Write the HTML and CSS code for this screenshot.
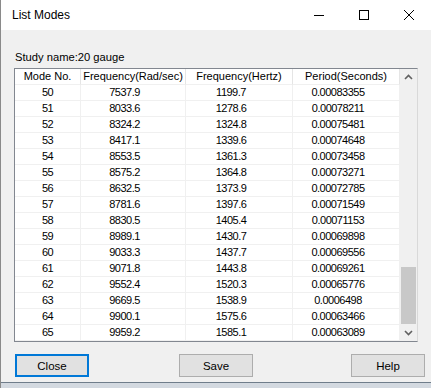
FILE: index.html
```html
<!DOCTYPE html>
<html>
<head>
<meta charset="utf-8">
<link rel="stylesheet" href="styles.css">
</head>
<body>
<div class="window">
  <div class="titlebar">
    <span class="title">List Modes</span>
    <div class="controls">
      <span class="ctl ctl-min"><svg width="12" height="12" viewBox="0 0 12 12"><path d="M1 6.5H11" stroke="#000" stroke-width="1"/></svg></span>
      <span class="ctl ctl-max"><svg width="12" height="12" viewBox="0 0 12 12"><rect x="1.5" y="1.5" width="9" height="9" fill="none" stroke="#000" stroke-width="1"/></svg></span>
      <span class="ctl ctl-close"><svg width="12" height="12" viewBox="0 0 12 12"><path d="M1 1L11 11M11 1L1 11" stroke="#000" stroke-width="1"/></svg></span>
    </div>
  </div>
  <div class="client">
    <div class="label">Study name:20 gauge</div>
    <div class="listview">
      <div class="grid">
        <div class="row head">
          <div class="c c1">Mode No.</div>
          <div class="c c2">Frequency(Rad/sec)</div>
          <div class="c c3">Frequency(Hertz)</div>
          <div class="c c4">Period(Seconds)</div>
        </div>
        <div class="row"><div class="c c1">50</div><div class="c c2">7537.9</div><div class="c c3">1199.7</div><div class="c c4">0.00083355</div></div>
        <div class="row"><div class="c c1">51</div><div class="c c2">8033.6</div><div class="c c3">1278.6</div><div class="c c4">0.00078211</div></div>
        <div class="row"><div class="c c1">52</div><div class="c c2">8324.2</div><div class="c c3">1324.8</div><div class="c c4">0.00075481</div></div>
        <div class="row"><div class="c c1">53</div><div class="c c2">8417.1</div><div class="c c3">1339.6</div><div class="c c4">0.00074648</div></div>
        <div class="row"><div class="c c1">54</div><div class="c c2">8553.5</div><div class="c c3">1361.3</div><div class="c c4">0.00073458</div></div>
        <div class="row"><div class="c c1">55</div><div class="c c2">8575.2</div><div class="c c3">1364.8</div><div class="c c4">0.00073271</div></div>
        <div class="row"><div class="c c1">56</div><div class="c c2">8632.5</div><div class="c c3">1373.9</div><div class="c c4">0.00072785</div></div>
        <div class="row"><div class="c c1">57</div><div class="c c2">8781.6</div><div class="c c3">1397.6</div><div class="c c4">0.00071549</div></div>
        <div class="row"><div class="c c1">58</div><div class="c c2">8830.5</div><div class="c c3">1405.4</div><div class="c c4">0.00071153</div></div>
        <div class="row"><div class="c c1">59</div><div class="c c2">8989.1</div><div class="c c3">1430.7</div><div class="c c4">0.00069898</div></div>
        <div class="row"><div class="c c1">60</div><div class="c c2">9033.3</div><div class="c c3">1437.7</div><div class="c c4">0.00069556</div></div>
        <div class="row"><div class="c c1">61</div><div class="c c2">9071.8</div><div class="c c3">1443.8</div><div class="c c4">0.00069261</div></div>
        <div class="row"><div class="c c1">62</div><div class="c c2">9552.4</div><div class="c c3">1520.3</div><div class="c c4">0.00065776</div></div>
        <div class="row"><div class="c c1">63</div><div class="c c2">9669.5</div><div class="c c3">1538.9</div><div class="c c4">0.0006498</div></div>
        <div class="row"><div class="c c1">64</div><div class="c c2">9900.1</div><div class="c c3">1575.6</div><div class="c c4">0.00063466</div></div>
        <div class="row"><div class="c c1">65</div><div class="c c2">9959.2</div><div class="c c3">1585.1</div><div class="c c4">0.00063089</div></div>
      </div>
      <div class="scrollbar">
        <div class="sb-btn"><svg width="17" height="17" viewBox="0 0 17 17"><path d="M5 10L8.5 6.5L12 10" fill="none" stroke="#606060" stroke-width="1.6"/></svg></div>
        <div class="sb-track"><div class="sb-thumb"></div></div>
        <div class="sb-btn"><svg width="17" height="17" viewBox="0 0 17 17"><path d="M5 7L8.5 10.5L12 7" fill="none" stroke="#606060" stroke-width="1.6"/></svg></div>
      </div>
    </div>
    <div class="buttons">
      <button class="btn btn-default">Close</button>
      <button class="btn btn-save">Save</button>
      <button class="btn btn-help">Help</button>
    </div>
  </div>
  <div class="bottom"></div>
</div>
</body>
</html>
```
FILE: styles.css
```css
* { box-sizing: border-box; }
html, body { margin: 0; padding: 0; background: #f0f0f0; }
body { font-family: "Liberation Sans", Arial, sans-serif; color: #000; }

.window {
  width: 431px;
  height: 388px;
  display: flex;
  flex-direction: column;
  border-left: 1px solid #8a8a8a;
  overflow: hidden;
}

.titlebar {
  height: 30px;
  background: #fff;
  display: flex;
  align-items: center;
  justify-content: space-between;
  flex: none;
}
.title {
  font-size: 12px;
  padding-left: 11px;
}
.controls { display: flex; height: 30px; }
.ctl {
  width: 45px;
  height: 30px;
  display: flex;
  align-items: center;
  justify-content: center;
}
.ctl svg { display: block; }

.client {
  flex: 1;
  background: #f0f0f0;
  padding-left: 13px;
  display: flex;
  flex-direction: column;
}

.label {
  margin-top: 20px;
  height: 14px;
  line-height: 14px;
  font-size: 11.2px;
  padding-left: 1px;
}

.listview {
  margin-top: 4px;
  width: 404px;
  height: 274px;
  border: 1px solid #828790;
  border-right-color: #d9d9d9;
  background: #fff;
  display: flex;
}

.grid { width: 385px; display: flex; flex-direction: column; }
.row { display: flex; height: 16px; }
.c {
  height: 16px;
  line-height: 15px;
  font-size: 11px;
  text-align: center;
  border-right: 1px solid #f0f0f0;
  border-bottom: 1px solid #f0f0f0;
  white-space: nowrap;
  letter-spacing: -0.5px;
}
.head .c {
  letter-spacing: 0;
  border-right-color: #e5e5e5;
  border-bottom-color: #f0f0f0;
}
.c1 { width: 66px; }
.c2 { width: 105px; padding-right: 17px; }
.c3 { width: 107px; padding-right: 16px; }
.c4 { width: 107px; padding-right: 16px; }
.head .c2, .head .c3, .head .c4 { padding-right: 0; }

.scrollbar {
  width: 17px;
  background: #f0f0f0;
  display: flex;
  flex-direction: column;
}
.sb-btn { height: 17px; flex: none; }
.sb-btn svg { display: block; }
.sb-track {
  flex: 1;
  display: flex;
  flex-direction: column;
  justify-content: flex-end;
  padding: 0 1px;
}
.sb-thumb {
  height: 57px;
  background: #c8c8c8;
}

.buttons {
  margin-top: 12px;
  display: flex;
  padding-left: 1px;
}
.btn {
  width: 74px;
  height: 23px;
  font-family: "Liberation Sans", Arial, sans-serif;
  font-size: 11.5px;
  color: #000;
  background: #e1e1e1;
  border: 1px solid #adadad;
  padding: 0;
  margin: 0;
}
.btn-default { border: 2px solid #0078d7; }
.btn-save { margin-left: 90px; }
.btn-help { margin-left: 98px; }

.bottom {
  height: 6px;
  flex: none;
  background: #d3d9e0;
  border-top: 1px solid #6f7d8b;
}
```
